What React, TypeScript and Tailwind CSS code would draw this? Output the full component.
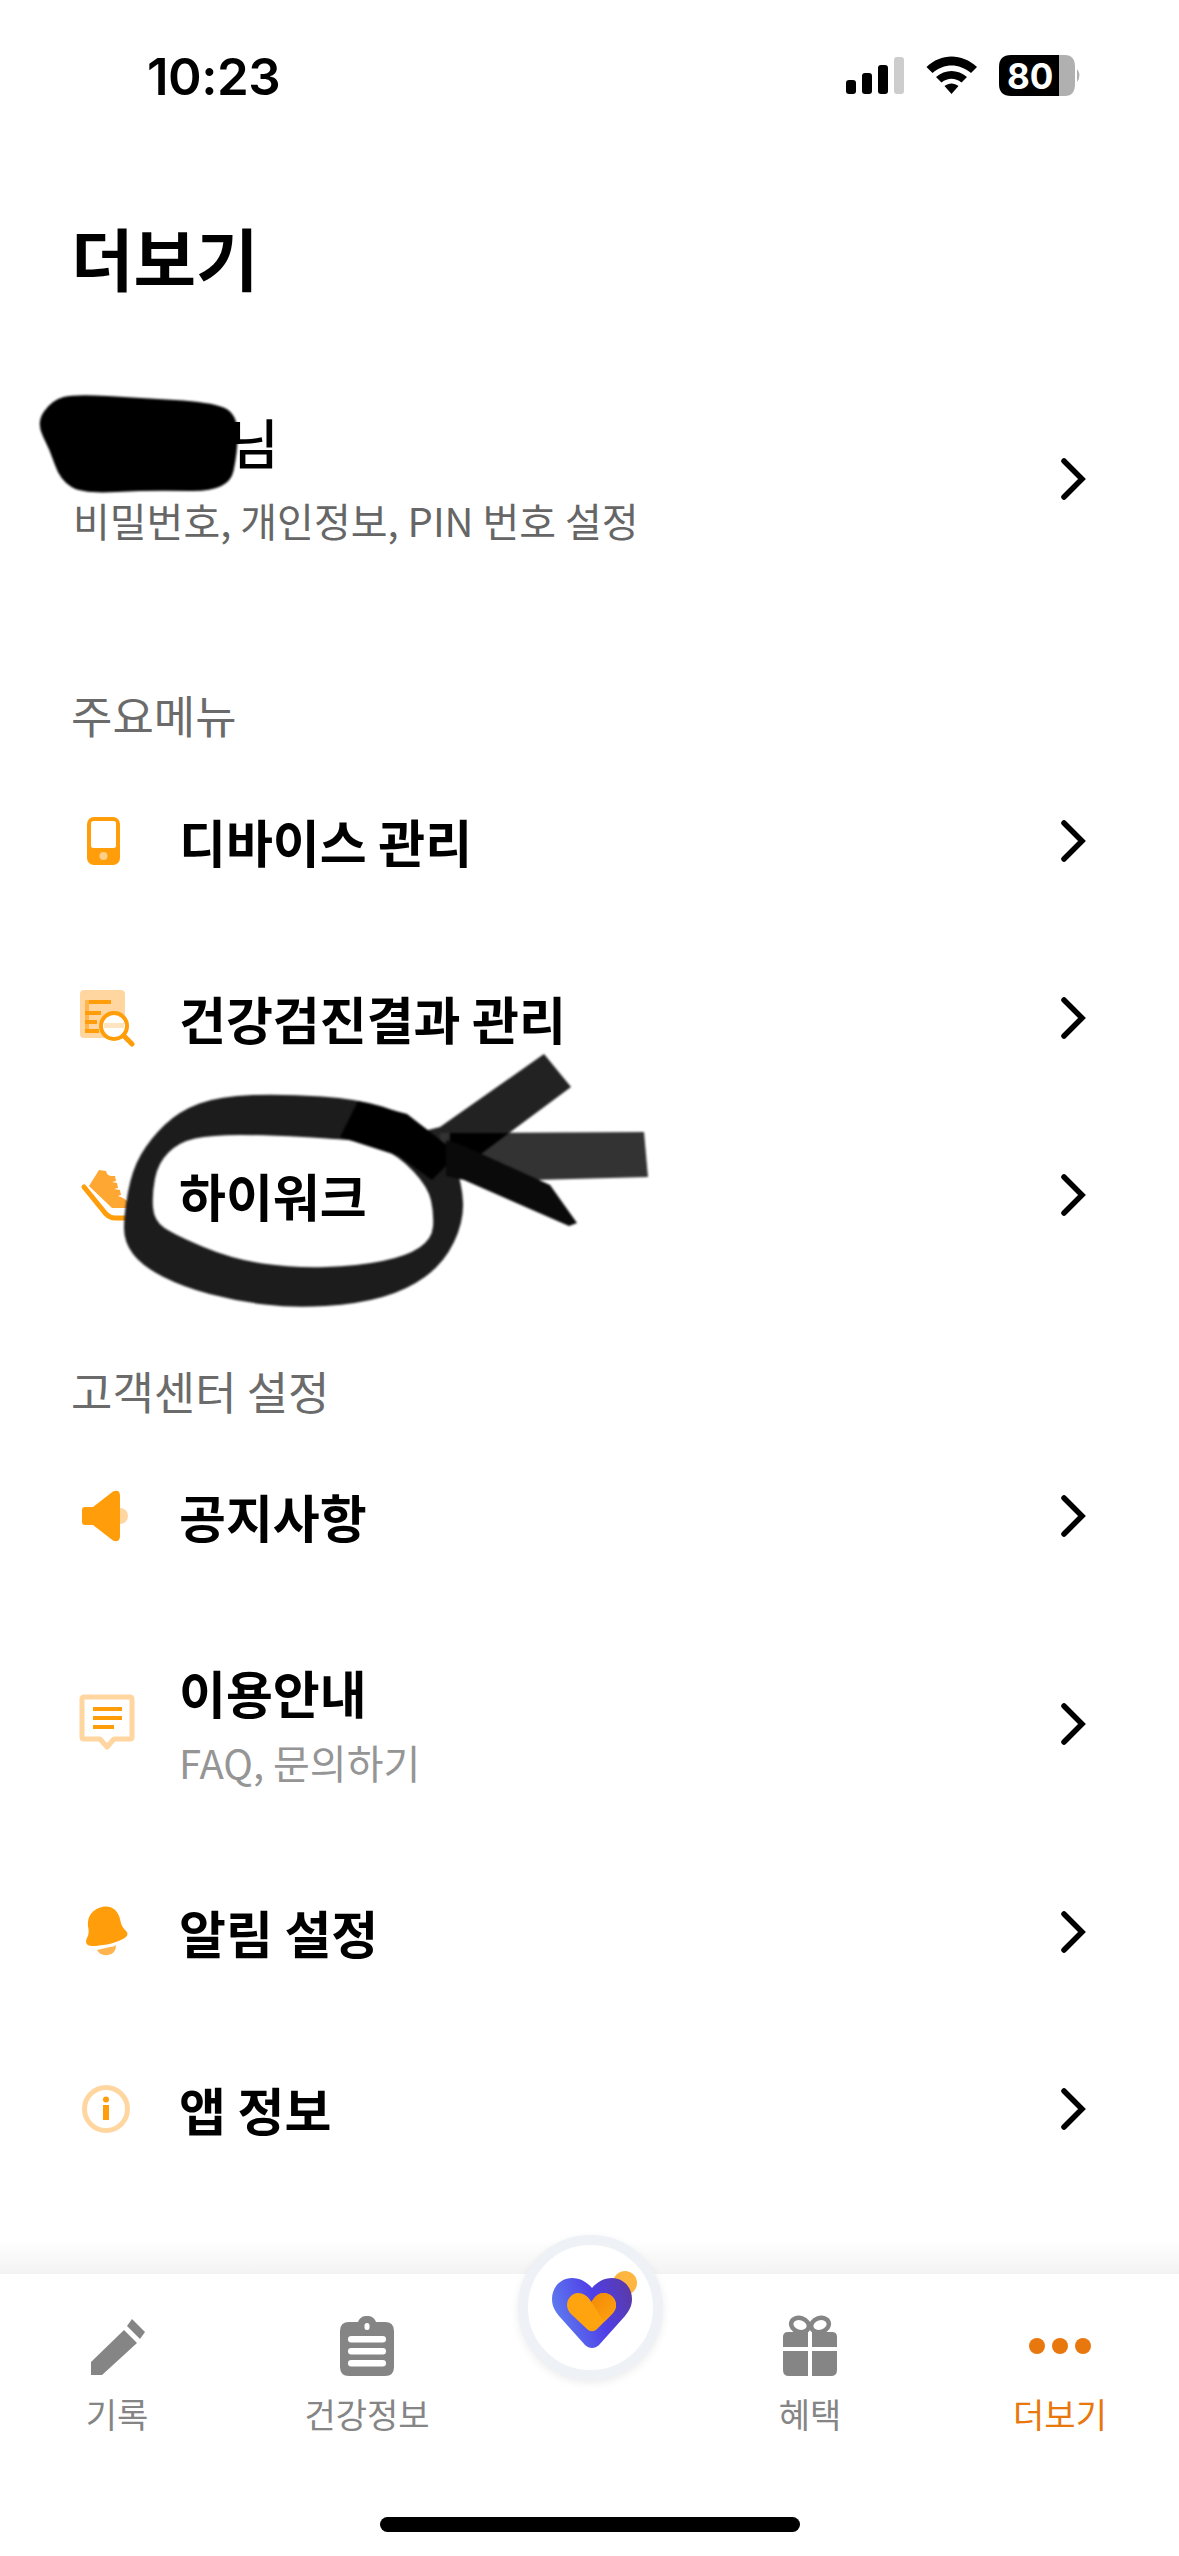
import React from "react";

const KR = "font-['Noto_Sans_CJK_KR','Noto_Sans',sans-serif]";

const Chevron = () => (
  <svg width="28" height="42" viewBox="0 0 28 42" className="shrink-0">
    <path d="M5 3 L23 21 L5 39" fill="none" stroke="#000" strokeWidth="5.5" strokeLinecap="round" strokeLinejoin="miter" />
  </svg>
);

const StatusIcons = () => (
  <svg width="240" height="44" viewBox="846 66 240 44">
    <rect x="846" y="92" width="10" height="14" rx="3" fill="#000" />
    <rect x="862" y="85" width="10" height="21" rx="3" fill="#000" />
    <rect x="878" y="77" width="10" height="29" rx="3" fill="#000" />
    <rect x="894" y="69" width="10" height="37" rx="3" fill="#cdcdcd" />
    <path d="M926.5 79 C941 65 962 65 977 79 L971 85 C959 75 944 75 932.5 85 Z" fill="#000" />
    <path d="M936 89 C945 81 958 81 967 89 L961.5 94.5 C955 89.5 948 89.5 941.5 94.5 Z" fill="#000" />
    <path d="M944.5 98 C949 94.5 954 94.5 958.5 98 L951.5 106 Z" fill="#000" />
    <path d="M1059 67 H1065 Q1075 67 1075 79 V96 Q1075 108 1065 108 H1059 Z" fill="#b0b0b0" />
    <path d="M1011 67 H1059 V108 H1011 Q999 108 999 96 V79 Q999 67 1011 67 Z" fill="#000" />
    <path d="M1077 81 Q1082 87 1077 94 Z" fill="#b0b0b0" />
  </svg>
);

const DeviceIcon = () => (
  <svg width="56" height="56" viewBox="0 0 56 56">
    <rect x="8" y="4" width="33" height="48" rx="7" fill="#ff9d0a" />
    <rect x="12" y="8" width="25" height="27" rx="2.5" fill="#fff" />
    <circle cx="24.5" cy="43" r="4" fill="#ffd08a" />
  </svg>
);

const ReportIcon = () => (
  <svg width="58" height="58" viewBox="0 0 58 58">
    <rect x="2" y="1" width="45" height="48" rx="4" fill="#ffd6a0" />
    <rect x="7" y="11" width="26" height="4" fill="#ff9d0a" />
    <rect x="7" y="11" width="4" height="30" fill="#ffb44d" />
    <rect x="7" y="22" width="16" height="4" fill="#ff9d0a" />
    <rect x="7" y="31" width="12" height="4" fill="#ff9d0a" />
    <rect x="7" y="40" width="14" height="4" fill="#ff9d0a" />
    <circle cx="36" cy="37" r="13" fill="#fff" stroke="#ff9d0a" strokeWidth="4" />
    <rect x="26" y="34" width="20" height="5" fill="#ffe4c2" />
    <path d="M46 47 L54 55" stroke="#ff9d0a" strokeWidth="5" strokeLinecap="round" />
  </svg>
);

const ShoeIcon = () => (
  <svg width="56" height="56" viewBox="0 0 56 56">
    <path d="M10 19 L20 3 L27 4 Q28 9 33 9 L36 9 L37 14 L33 15 L38 16 L39 21 L35 22 L41 23 L42 28 L39 29 Q46 31 50 36 L50 41 L33 41 Z" fill="#ffa733" />
    <path d="M5 20 L27 47 Q31 51 36 51 L50 51" fill="none" stroke="#ff9d0a" strokeWidth="5" strokeLinecap="round" />
  </svg>
);

const SpeakerIcon = () => (
  <svg width="56" height="56" viewBox="0 0 56 56">
    <circle cx="41" cy="28" r="8" fill="#ffd6a0" />
    <path d="M6 19 H14 L34 3.5 Q41 1 41 8 V48 Q41 55 34 52.5 L14 37 H6 Q3 37 3 34 V22 Q3 19 6 19 Z" fill="#ff9d0a" />
  </svg>
);

const GuideIcon = () => (
  <svg width="58" height="62" viewBox="0 0 58 62">
    <path d="M6 4 H52 Q54 4 54 6 V44 Q54 46 52 46 H36 L29 54 L22 46 H6 Q4 46 4 44 V6 Q4 4 6 4 Z" fill="#fff" stroke="#ffd6a0" strokeWidth="5" strokeLinejoin="round" />
    <rect x="15" y="14" width="29" height="4" fill="#ff9d0a" />
    <rect x="15" y="23" width="29" height="4" fill="#ff9d0a" />
    <rect x="15" y="32" width="21" height="4" fill="#ff9d0a" />
  </svg>
);

const BellIcon = () => (
  <svg width="56" height="56" viewBox="0 0 56 56">
    <path d="M31 43 Q35 43 37 41 Q37 50 29 51 Q21 52 18 46 Z" fill="#ffb44d" />
    <path d="M23 3 C32 1 39 6 41 15 C42 21 44 24 47 27 C50 30 48 33 44 35 C34 40 22 42 13 42 C7 42 6 38 8 34 C10 30 10 27 9 22 C8 12 14 5 23 3 Z" fill="#ff9d0a" />
  </svg>
);

const InfoIcon = () => (
  <svg width="56" height="56" viewBox="0 0 56 56">
    <circle cx="27" cy="28" r="21.5" fill="#fff" stroke="#ffd6a0" strokeWidth="5" />
    <circle cx="27" cy="18.5" r="3" fill="#ff9d0a" />
    <rect x="24" y="24" width="6" height="15" fill="#ff9d0a" />
  </svg>
);

const PencilIcon = () => (
  <svg width="58" height="60" viewBox="0 0 58 60">
    <path d="M44 3 L57 16 L52 23 L39 10 Z" fill="#858585" />
    <path d="M36 14 L49 27 L14 59 H3 V46 Z" fill="#858585" />
  </svg>
);

const ClipboardIcon = () => (
  <svg width="56" height="62" viewBox="0 0 56 62">
    <path d="M10 7 H19 C21 2 24 1 28 1 C32 1 35 2 37 7 H46 Q55 7 55 16 V52 Q55 61 46 61 H10 Q1 61 1 52 V16 Q1 7 10 7 Z" fill="#858585" />
    <rect x="25.5" y="8" width="5" height="7" rx="2.5" fill="#fff" />
    <rect x="9" y="21" width="38" height="6.5" rx="3.2" fill="#fff" />
    <rect x="9" y="33" width="38" height="6.5" rx="3.2" fill="#fff" />
    <rect x="9" y="45" width="38" height="6.5" rx="3.2" fill="#fff" />
  </svg>
);

const GiftIcon = () => (
  <svg width="56" height="62" viewBox="0 0 56 62">
    <ellipse cx="18" cy="10" rx="9" ry="7" fill="none" stroke="#858585" strokeWidth="4.5" transform="rotate(18 18 10)" />
    <ellipse cx="38" cy="10" rx="9" ry="7" fill="none" stroke="#858585" strokeWidth="4.5" transform="rotate(-18 38 10)" />
    <path d="M6 17 H26 V32 H1 V22 Q1 17 6 17 Z" fill="#858585" />
    <path d="M30 17 H50 Q55 17 55 22 V32 H30 Z" fill="#858585" />
    <path d="M1 36 H26 V61 H7 Q1 61 1 55 Z" fill="#858585" />
    <path d="M30 36 H55 V55 Q55 61 49 61 H30 Z" fill="#858585" />
  </svg>
);

const DotsIcon = () => (
  <svg width="64" height="18" viewBox="0 0 64 18">
    <circle cx="9" cy="9" r="8" fill="#e8770d" />
    <circle cx="32" cy="9" r="8" fill="#e8770d" />
    <circle cx="55" cy="9" r="8" fill="#e8770d" />
  </svg>
);

const HeartLogo = () => (
  <svg width="90" height="80" viewBox="0 0 90 80">
    <defs>
      <linearGradient id="outer" x1="0" y1="0.5" x2="1" y2="0.2">
        <stop offset="0" stopColor="#5f7df0" />
        <stop offset="0.55" stopColor="#4f3fe6" />
        <stop offset="1" stopColor="#5a3aa8" />
      </linearGradient>
      <linearGradient id="lobe" x1="0" y1="0" x2="1" y2="1">
        <stop offset="0" stopColor="#f28a08" />
        <stop offset="1" stopColor="#ffa30f" />
      </linearGradient>
    </defs>
    <circle cx="73" cy="12" r="12" fill="#ffb640" />
    <g transform="translate(0 7)">
      <path d="M40 10 C35 4 28 0 20 0 C9 0 0 9 0 21 C0 28 3 33 7 38 L33 67 C37 71 43 71 47 67 L73 38 C77 33 80 28 80 21 C80 9 71 0 60 0 C52 0 45 4 40 10 Z" fill="url(#outer)" />
      <path d="M39.5 24 C36 18 31 15 26 15 C20 15 15 21 15 27 C15 31 17 34 19 36 L35 51 C38 54 42 54 45 51 L60 36 C63 33 64 30 64 27 C64 20 58 15 52 15 C47 15 43 18 39.5 24 Z" fill="#ffa30f" />
      <path d="M39.5 24 C43 18 47 15 52 15 C58 15 64 20 64 27 C64 30 63 33 60 36 L52 44 Z" fill="url(#lobe)" />
    </g>
  </svg>
);

// closed smooth curve through the midpoints of a point list
const smooth = (pts: number[][]) => {
  const mid = (a: number[], b: number[]) => [(a[0] + b[0]) / 2, (a[1] + b[1]) / 2];
  const start = mid(pts[pts.length - 1], pts[0]);
  let d = `M${start[0]} ${start[1]}`;
  pts.forEach((p, i) => {
    const m = mid(p, pts[(i + 1) % pts.length]);
    d += ` Q${p[0]} ${p[1]} ${m[0]} ${m[1]}`;
  });
  return d + " Z";
};

const blob = [[36, 423], [52, 400], [75, 394], [140, 398], [210, 402], [237, 413], [238, 450], [229, 492], [150, 490], [83, 494], [60, 480], [50, 450]];
const ringOuter = [[358, 1099], [285, 1094], [220, 1096], [179, 1111], [150, 1139], [132, 1170], [124, 1214], [124, 1242], [142, 1266], [183, 1287], [236, 1301], [293, 1308], [358, 1304], [407, 1290], [444, 1263], [464, 1221], [462, 1183], [448, 1146], [407, 1114]];
const ringInner = [[338, 1139], [269, 1135], [211, 1135], [179, 1142], [158, 1163], [152, 1194], [154, 1221], [175, 1235], [232, 1259], [293, 1268], [358, 1266], [407, 1256], [432, 1239], [434, 1214], [428, 1187], [399, 1156], [367, 1142]];

// marker scribbles sitting on top of the screenshot
const Scribbles = () => (
  <svg width="1179" height="2556" viewBox="0 0 1179 2556" className="absolute left-0 top-0 pointer-events-none blur-[1px]">
    <path d={smooth(blob)} fill="#000" />
    <path d="M424 1131 L440 1127 L544 1054 L571 1087 L509 1133 L460 1158 L436 1160 Z" fill="#222" />
    <path d="M440 1133 L644 1132 L648 1177 L534 1180 L440 1170 Z" fill="#333" />
    <path d={`${smooth(ringOuter)} ${smooth(ringInner)}`} fill="#1c1c1c" fillRule="evenodd" />
    <path d="M358 1101 L407 1114 L448 1146 L456 1156 L432 1180 L399 1156 L340 1137 Z" fill="#000" />
    <path d="M450 1133 L509 1133 L473 1160 L448 1170 Z" fill="#000" />
    <path d="M446 1140 L464 1146 L550 1185 L577 1223 L569 1226 L464 1180 L446 1176 Z" fill="#0a0a0a" />
  </svg>
);

type RowProps = { icon: React.ReactNode; label: string; sub?: string; tall?: boolean };

const MenuRow = ({ icon, label, sub, tall }: RowProps) => (
  <div className={`flex items-center pl-[78px] pr-[92px] ${tall ? "h-[239px]" : "h-[177px]"}`}>
    <div className="flex h-[60px] w-[58px] shrink-0 items-center justify-center">{icon}</div>
    <div className="ml-[43px] flex-1">
      <div className="text-[51px] leading-[64px] font-semibold text-black">{label}</div>
      {sub && <div className="mt-[13px] text-[40px] leading-[50px] text-[#959595]">{sub}</div>}
    </div>
    <Chevron />
  </div>
);

const TabItem = ({ icon, label, className, active }: { icon: React.ReactNode; label: string; className: string; active?: boolean }) => (
  <div className={`flex flex-col items-center ${className}`}>
    <div className="flex h-[64px] items-center justify-center">{icon}</div>
    <div className={`mt-[14px] text-[34px] leading-[44px] ${active ? "text-[#e8770d]" : "text-[#858585]"}`}>{label}</div>
  </div>
);

export default function App() {
  return (
    <div className={`relative flex h-[2556px] w-[1179px] flex-col overflow-hidden bg-white ${KR}`}>
      {/* Status bar */}
      <div className="flex h-[152px] shrink-0 items-center justify-between pl-[147px] pr-[93px]">
        <span className="font-['Inter',sans-serif] text-[51px] leading-none font-semibold tracking-[-0.5px] text-black">10:23</span>
        <div className="relative flex items-center">
          <StatusIcons />
          <span className="absolute left-[161px] top-[3px] font-['Inter',sans-serif] text-[35px] leading-[38px] font-bold text-white">80</span>
        </div>
      </div>

      <h1 className="mt-[60px] pl-[71px] text-[68px] leading-[90px] font-bold text-black">더보기</h1>

      {/* Account */}
      <div className="mt-[110px] flex items-center pl-[73px] pr-[92px]">
        <div className="flex-1">
          <div className="pl-[156px] text-[54px] leading-[60px] font-medium text-black">님</div>
          <div className="mt-[23px] text-[40px] leading-[50px] text-[#666666]">비밀번호, 개인정보, PIN 번호 설정</div>
        </div>
        <Chevron />
      </div>

      {/* Main menu */}
      <div className="mt-[145px] pl-[71px] text-[45px] leading-[50px] text-[#6b6b6b]">주요메뉴</div>
      <div className="mt-[12px]">
        <MenuRow icon={<DeviceIcon />} label="디바이스 관리" />
        <MenuRow icon={<ReportIcon />} label="건강검진결과 관리" />
        <MenuRow icon={<ShoeIcon />} label="하이워크" />
      </div>

      {/* Customer center */}
      <div className="mt-[83px] pl-[71px] text-[45px] leading-[50px] text-[#6b6b6b]">고객센터 설정</div>
      <div className="mt-[11px]">
        <MenuRow icon={<SpeakerIcon />} label="공지사항" />
        <MenuRow icon={<GuideIcon />} label="이용안내" sub="FAQ, 문의하기" tall />
        <MenuRow icon={<BellIcon />} label="알림 설정" />
        <MenuRow icon={<InfoIcon />} label="앱 정보" />
      </div>

      {/* Bottom tabs */}
      <div className="mt-auto shrink-0">
        <div className="h-[34px] bg-gradient-to-b from-white to-[#f3f3f3]" />
        <div className="h-[282px] bg-white">
          <div className="flex pt-[40px]">
            <TabItem className="w-[234px]" icon={<PencilIcon />} label="기록" />
            <TabItem className="w-[266px]" icon={<ClipboardIcon />} label="건강정보" />
            <div className="w-[177px]" />
            <TabItem className="w-[266px]" icon={<GiftIcon />} label="혜택" />
            <TabItem className="w-[234px]" icon={<DotsIcon />} label="더보기" active />
          </div>
          <div className="mx-auto mt-[81px] h-[15px] w-[420px] rounded-full bg-black" />
        </div>
      </div>

      {/* Center floating button */}
      <div className="absolute left-[518px] top-[2235px] flex h-[145px] w-[145px] items-center justify-center rounded-full border-[10px] border-[#eef1f5] bg-white shadow-[0_3px_8px_rgba(0,0,0,0.08)]">
        <div className="ml-[12px] mt-[6px] flex">
          <HeartLogo />
        </div>
      </div>

      <Scribbles />
    </div>
  );
}
